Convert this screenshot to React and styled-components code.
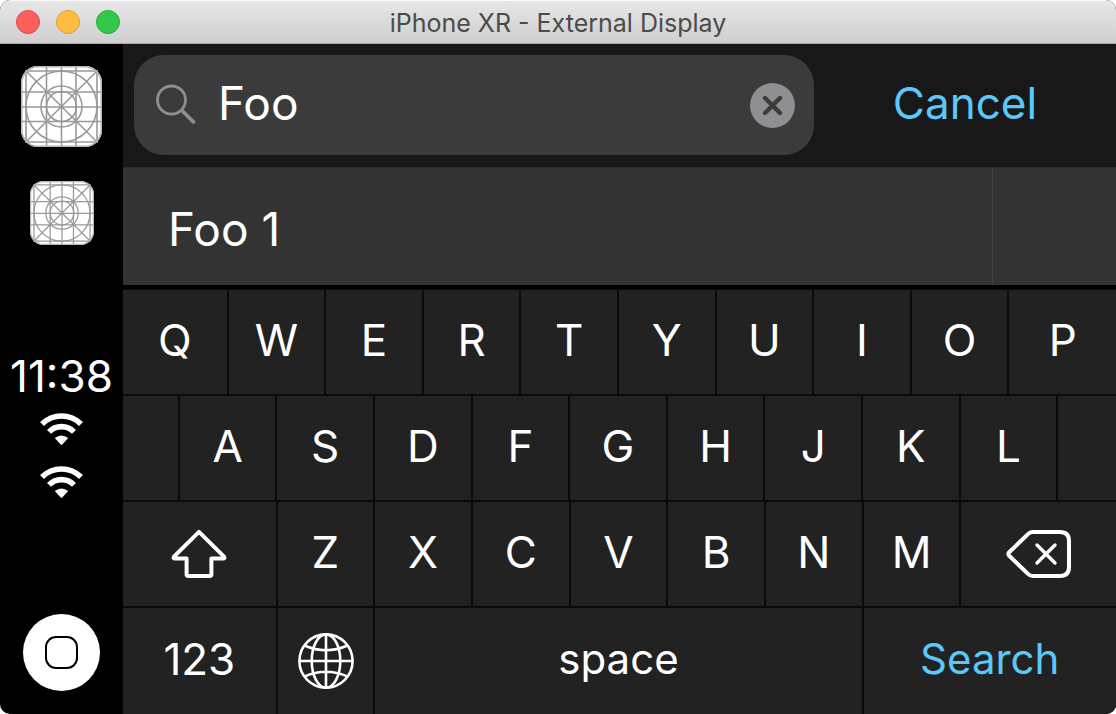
import React from "react";
import styled, { createGlobalStyle } from "styled-components";

const Global = createGlobalStyle`
  * { box-sizing: border-box; }
  body { margin: 0; background: #fff; }
  button, input {
    margin: 0;
    padding: 0;
    border: 0;
    border-radius: 0;
    background: none;
    color: inherit;
    font: inherit;
  }
  button { cursor: pointer; }
  svg { display: block; }
`;

const Window = styled.div`
  display: flex;
  flex-direction: column;
  min-height: 100vh;
  overflow: hidden;
  border-radius: 10px;
  background: #000;
  color: #fff;
  font-family: Inter, "Liberation Sans", sans-serif;
  font-size: 44px;
  line-height: 1;
`;

const TitleBar = styled.header`
  display: grid;
  grid-template-columns: 1fr auto 1fr;
  align-items: center;
  height: 44px;
  padding: 0 16px;
  border-top: 1px solid #f6f6f6;
  border-bottom: 1px solid #a8a8a8;
  background: linear-gradient(#e6e6e6, #cfcfcf);
`;

const Lights = styled.div`
  display: flex;
  gap: 16px;
`;

const Light = styled.button`
  width: 24px;
  height: 24px;
  border: 1px solid ${(p) => p.$edge};
  border-radius: 50%;
  background: ${(p) => p.$fill};
`;

const Title = styled.h1`
  margin: 0;
  padding-top: 2px;
  color: #4b4b4b;
  font-size: 25px;
  font-weight: 400;
  line-height: 32px;
`;

const Body = styled.div`
  display: flex;
  flex: 1;
`;

const Sidebar = styled.aside`
  display: flex;
  flex: 0 0 123px;
  flex-direction: column;
  align-items: center;
  justify-content: space-between;
  padding: 22px 0 23px;
`;

const Stack = styled.div`
  display: flex;
  flex-direction: column;
  align-items: center;
  gap: ${(p) => p.$gap}px;
`;

const Status = styled(Stack)`
  padding-bottom: 2px;
`;

const Clock = styled.time`
  line-height: 32px;
  white-space: nowrap;
`;

const HomeButton = styled.button`
  display: grid;
  place-items: center;
  width: 77px;
  height: 77px;
  border-radius: 50%;
  background: #fff;
`;

const HomeMark = styled.span`
  width: 33px;
  height: 33px;
  border: 2px solid #000;
  border-radius: 11px;
`;

const Main = styled.main`
  display: flex;
  flex: 1;
  flex-direction: column;
  min-width: 0;
`;

const SearchBar = styled.form`
  display: grid;
  grid-template-columns: 680fr 302fr;
  height: 123px;
  padding: 11px 0 12px 11px;
  background: #181818;
`;

const Field = styled.label`
  display: flex;
  align-items: center;
  gap: 21px;
  min-width: 0;
  padding: 0 19px 0 21px;
  border-radius: 30px;
  background: #3b3b3b;
`;

const FieldInput = styled.input`
  flex: 1;
  min-width: 0;
  height: 100%;
  padding-bottom: 4px;
  outline: none;
  font-size: 46px;
`;

const ClearButton = styled.button`
  flex: none;
  border-radius: 50%;
`;

const TextButton = styled.button`
  padding-bottom: 4px;
  color: #5ac8fa;
`;

const Suggestions = styled.div`
  display: flex;
  height: 122px;
  border-top: 1px solid #2b2b2b;
  border-bottom: 4px solid #000;
  background: #333;
  font-size: 46px;
`;

const Suggestion = styled.button`
  flex: 1;
  padding: 4px 45px 0;
  border-right: 1px solid #454545;
  text-align: left;
`;

const SuggestionRest = styled.div`
  flex: 0 0 123px;
`;

const Keyboard = styled.div`
  display: grid;
  flex: 1;
  grid-template-rows: repeat(3, 104fr) 106fr;
  gap: 2px;
  padding-top: 1px;
  background: #0a0a0a;
`;

const KeyRow = styled.div`
  display: grid;
  grid-template-columns: ${(p) => p.$columns};
  gap: 2px;
`;

const Key = styled.button`
  display: flex;
  align-items: center;
  justify-content: center;
  min-width: 0;
  padding-bottom: ${(p) => (p.$icon ? 0 : 4)}px;
  background: #222;
  color: ${(p) => (p.$accent ? "#5ac8fa" : "#fff")};
  font-size: ${(p) => (p.$word ? 42 : 44)}px;
`;

const KeyFiller = styled.div`
  background: #222;
`;

function AppIcon({ size }) {
  return (
    <svg width={size} height={size} viewBox="0 0 81 81" fill="none" stroke="#999" strokeWidth="1.6">
      <rect width="81" height="81" rx="17" fill="#fff" stroke="none" />
      <path d="M5 4v73M25.500 0v81M40.500 0v81M55 0v81M76 4v73M4 5h73M0 26h81M0 41h81M0 55.500h81M4 76h73M5 5l71 71M76 5L5 76" />
      <circle cx="40.500" cy="40.500" r="35.500" />
      <circle cx="40.500" cy="40.500" r="20.500" />
      <circle cx="40.500" cy="40.500" r="15" />
      <rect x=".7" y=".7" width="79.600" height="79.600" rx="16.500" stroke="#b5b5b5" />
    </svg>
  );
}

function WifiIcon() {
  return (
    <svg width="43" height="32" viewBox="0 0 43 32" fill="none" stroke="#fff" strokeWidth="5.600">
      <path d="M2 11A27.700 27.700 0 0 1 41 11" />
      <path d="M9 18.900A17.500 17.500 0 0 1 34 18.900" />
      <path d="M14.800 25Q21.500 20 28.200 25L22.500 31.200Q21.500 32.200 20.500 31.200Z" fill="#fff" stroke="none" />
    </svg>
  );
}

function SearchIcon() {
  return (
    <svg width="42" height="42" viewBox="0 0 42 42" fill="none" stroke="#8e8e93" strokeLinecap="round">
      <circle cx="16.500" cy="16" r="14" strokeWidth="2.800" />
      <path d="M27 26.500L38.500 38" strokeWidth="3.800" />
    </svg>
  );
}

function ClearIcon() {
  return (
    <svg width="45" height="45" viewBox="0 0 45 45">
      <circle cx="22.500" cy="22.500" r="22.500" fill="#8e8e93" />
      <path d="M15 15l15 15M30 15L15 30" stroke="#3b3b3b" strokeWidth="4.400" strokeLinecap="round" />
    </svg>
  );
}

function ShiftIcon() {
  return (
    <svg width="56" height="50" viewBox="0 0 56 50" fill="none" stroke="#fff" strokeWidth="4" strokeLinejoin="round">
      <path d="M28 2.800L3 27.600Q1.800 29.500 4 29.500H15.600V45.200Q15.600 47 17.400 47H38.600Q40.400 47 40.400 45.200V29.500H52Q54.200 29.500 53 27.600Z" />
    </svg>
  );
}

function DeleteIcon() {
  return (
    <svg width="66" height="48" viewBox="0 0 66 48" fill="none" stroke="#fff" strokeLinecap="round" strokeLinejoin="round">
      <path d="M22.500 3.600Q24.200 2 27 2H54Q63 2 63 11V37Q63 46 54 46H27Q24.200 46 22.500 44.400L3.200 25.800Q1.600 24 3.200 22.200Z" strokeWidth="4" />
      <path d="M31 15l18 18M49 15L31 33" strokeWidth="3.400" />
    </svg>
  );
}

function GlobeIcon() {
  return (
    <svg width="56" height="56" viewBox="0 0 56 56" fill="none" stroke="#fff" strokeWidth="2.600">
      <circle cx="28" cy="28" r="26.600" />
      <ellipse cx="28" cy="28" rx="14.300" ry="26.600" />
      <path d="M28 1v54M1 28h54M6.500 12.500Q28 22 49.500 12.500M6.500 43.500Q28 34 49.500 43.500" />
    </svg>
  );
}

const letters = (row) => [...row].map((c) => <Key key={c} type="button">{c}</Key>);

export default function App() {
  return (
    <>
      <Global />
      <Window>
        <TitleBar>
          <Lights>
            <Light aria-label="Close" $fill="#fc605c" $edge="#df4744" />
            <Light aria-label="Minimize" $fill="#fdbc40" $edge="#de9f34" />
            <Light aria-label="Zoom" $fill="#34c84a" $edge="#27aa35" />
          </Lights>
          <Title>iPhone XR - External Display</Title>
        </TitleBar>
        <Body>
          <Sidebar>
            <Stack $gap={34}>
              <AppIcon size={81} />
              <AppIcon size={64} />
            </Stack>
            <Status $gap={21}>
              <Clock>11:38</Clock>
              <WifiIcon />
              <WifiIcon />
            </Status>
            <HomeButton aria-label="Home">
              <HomeMark />
            </HomeButton>
          </Sidebar>
          <Main>
            <SearchBar onSubmit={(e) => e.preventDefault()}>
              <Field>
                <SearchIcon />
                <FieldInput type="text" aria-label="Search" defaultValue="Foo" />
                <ClearButton type="button" aria-label="Clear text">
                  <ClearIcon />
                </ClearButton>
              </Field>
              <TextButton type="button">Cancel</TextButton>
            </SearchBar>
            <Suggestions>
              <Suggestion type="button">Foo 1</Suggestion>
              <SuggestionRest />
            </Suggestions>
            <Keyboard>
              <KeyRow $columns="104fr repeat(8, 96fr) 107fr">{letters("QWERTYUIOP")}</KeyRow>
              <KeyRow $columns="55fr repeat(9, 96fr) 58fr">
                <KeyFiller />
                {letters("ASDFGHJKL")}
                <KeyFiller />
              </KeyRow>
              <KeyRow $columns="153fr repeat(7, 96fr) 155fr">
                <Key type="button" aria-label="Shift" $icon><ShiftIcon /></Key>
                {letters("ZXCVBNM")}
                <Key type="button" aria-label="Delete" $icon><DeleteIcon /></Key>
              </KeyRow>
              <KeyRow $columns="153fr 96fr 487fr 253fr">
                <Key type="button">123</Key>
                <Key type="button" aria-label="Next keyboard" $icon><GlobeIcon /></Key>
                <Key type="button" $word>space</Key>
                <Key type="button" $word $accent>Search</Key>
              </KeyRow>
            </Keyboard>
          </Main>
        </Body>
      </Window>
    </>
  );
}
